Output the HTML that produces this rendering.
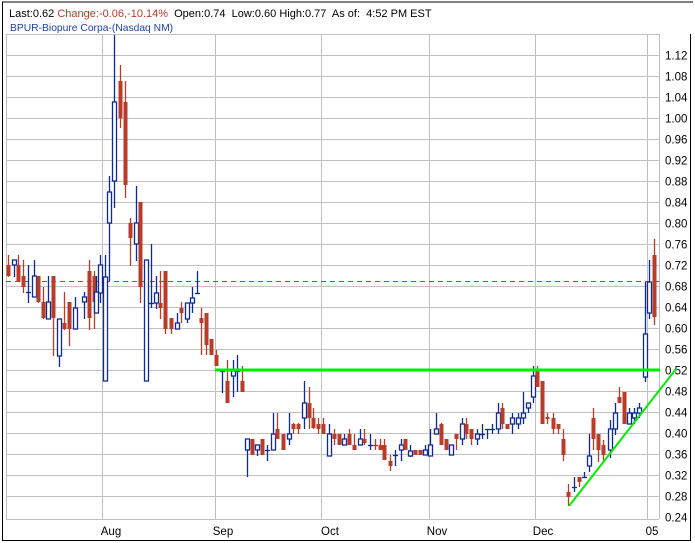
<!DOCTYPE html>
<html><head><meta charset="utf-8"><style>
html,body{margin:0;padding:0;background:#fff;width:695px;height:543px;overflow:hidden}
svg{display:block}
text{font-family:"Liberation Sans",Arial,sans-serif}
</style></head><body>
<svg id="s" width="695" height="543" xmlns="http://www.w3.org/2000/svg">
<rect x="0" y="0" width="695" height="543" fill="#fff"/>
<line x1="2" y1="2" x2="693" y2="2" stroke="#000"/>
<line x1="2.5" y1="2" x2="2.5" y2="541" stroke="#000"/>
<line x1="690.5" y1="34" x2="690.5" y2="541" stroke="#000"/>
<line x1="2" y1="540.5" x2="691" y2="540.5" stroke="#000"/>
<text x="9" y="17" font-size="11" fill="#000" xml:space="preserve">Last:0.62 <tspan fill="#c0392b">Change:-0.06,-10.14%</tspan>  Open:0.74  Low:0.60 High:0.77  As of:  4:52 PM EST</text>
<text x="10" y="31" font-size="10.3" fill="#1f3fa8">BPUR-Biopure Corpa-(Nasdaq NM)</text>
<g id="grid" stroke="#c0c0c0" stroke-width="1"></g>
<g id="lbl" font-size="11.5" fill="#000"></g>
<line x1="6" y1="281.5" x2="659" y2="281.5" stroke="#b5442c" stroke-dasharray="5,4"/>
<g id="c"></g>
<line x1="215" y1="370" x2="660" y2="370" stroke="#00ee00" stroke-width="3"/>
<line x1="569" y1="506" x2="676" y2="369" stroke="#00ee00" stroke-width="2"/>
<text x="111" y="535" font-size="11.5" text-anchor="middle">Aug</text>
<text x="223" y="535" font-size="11.5" text-anchor="middle">Sep</text>
<text x="330" y="535" font-size="11.5" text-anchor="middle">Oct</text>
<text x="437" y="535" font-size="11.5" text-anchor="middle">Nov</text>
<text x="543" y="535" font-size="11.5" text-anchor="middle">Dec</text>
<text x="652" y="535" font-size="11.5" text-anchor="middle">05</text>
</svg>
<script>
var NS="http://www.w3.org/2000/svg";
function el(p,t,a){var e=document.createElementNS(NS,t);for(var k in a)e.setAttribute(k,a[k]);p.appendChild(e);return e;}
var g=document.getElementById('grid'),l=document.getElementById('lbl');
el(g,'line',{x1:6,y1:34.5,x2:659,y2:34.5});
el(g,'line',{x1:6,y1:519.5,x2:659,y2:519.5});
[6.5,102.5,215.5,321.5,429.5,535.5,647.5,659.5].forEach(function(x){el(g,'line',{x1:x,y1:34,x2:x,y2:519});});
for(var i=0;i<=22;i++){var p=0.24+i*0.04;var y=Math.round(517-(p-0.24)*525)+0.5;
 if(i>0)el(g,'line',{x1:6,y1:y,x2:659,y2:y});
 var t=el(l,'text',{x:665,y:y+4});t.textContent=p.toFixed(2);}
var d=[
[8,265,276,255,277,'r'],[14,260,265,260,277,'b'],[18,265,282,255,282,'r'],[23,276,287,260,293,'r'],[28,292,293,265,303,'b'],
[34,276,297,260,297,'b'],[38,276,302,276,303,'r'],[43,302,318,287,319,'r'],[48,302,319,276,319,'b'],[53,276,318,276,356,'r'],
[59,319,356,319,367,'b'],[64,323,329,292,330,'r'],[69,302,329,302,346,'r'],[75,308,329,297,329,'b'],[84,297,302,292,319,'b'],
[89,271,318,260,330,'r'],[94,276,302,271,329,'r'],[96,292,313,276,313,'b'],[100,265,293,255,303,'b'],[105,277,381,255,381,'b'],
[109,192,223,176,281,'b'],[114,102,181,35,208,'b'],[120,81,118,65,128,'r'],[125,102,185,81,198,'r'],[130,223,238,218,266,'r'],
[136,223,244,186,261,'b'],[140,202,287,202,303,'r'],[146,260,381,260,381,'b'],[151,303,304,244,308,'b'],[156,293,303,276,309,'b'],
[160,303,308,271,319,'r'],[165,271,329,271,334,'r'],[171,318,329,318,334,'r'],[177,323,329,313,329,'b'],[181,308,313,302,323,'r'],
[187,303,319,303,323,'b'],[192,298,303,287,313,'b'],[197,293,294,271,293,'b'],[201,318,323,308,355,'r'],[206,313,345,313,355,'r'],
[211,339,355,339,355,'r'],[216,355,366,350,366,'r'],[222,371,372,371,393,'b'],[227,381,403,360,403,'r'],[233,371,376,360,397,'b'],
[237,371,372,355,392,'b'],[242,381,392,366,392,'r'],[247,439,450,439,477,'b'],[252,439,455,439,455,'r'],[257,445,450,445,456,'b'],
[262,439,455,439,455,'r'],[267,450,451,445,461,'b'],[273,434,450,413,450,'b'],[277,429,439,413,439,'r'],[283,434,450,434,450,'r'],
[289,434,439,413,445,'b'],[293,424,429,423,434,'r'],[298,424,429,423,434,'r'],[304,403,418,381,429,'b'],[309,403,418,387,429,'r'],
[313,418,428,408,429,'r'],[318,424,429,418,434,'r'],[323,424,434,418,434,'r'],[329,434,456,424,456,'b'],[334,434,439,429,445,'r'],
[339,434,445,434,445,'r'],[344,439,445,434,445,'b'],[349,434,445,429,445,'r'],[354,445,450,434,450,'r'],[360,439,445,429,445,'b'],
[364,439,443,429,445,'r'],[370,445,446,434,450,'b'],[375,445,446,439,450,'r'],[380,445,450,439,450,'r'],[384,445,460,439,460,'r'],
[390,461,466,455,471,'r'],[395,455,456,450,466,'b'],[401,445,450,439,461,'b'],[405,439,450,439,450,'r'],[410,451,456,445,457,'b'],
[415,450,455,450,455,'r'],[420,450,455,450,455,'r'],[425,450,455,445,455,'b'],[430,445,456,429,456,'b'],[436,429,434,413,434,'b'],
[441,424,445,423,445,'r'],[446,439,450,439,450,'r'],[451,445,455,445,455,'b'],[456,434,439,434,450,'r'],[462,424,439,418,445,'b'],
[466,424,434,418,439,'r'],[471,429,439,429,445,'r'],[477,434,439,429,445,'b'],[482,434,435,424,439,'b'],[487,429,430,429,439,'b'],
[492,429,430,424,434,'b'],[498,413,429,403,434,'b'],[502,408,424,403,429,'r'],[507,424,429,424,429,'r'],[512,418,424,413,434,'b'],
[518,418,424,413,429,'b'],[523,413,418,392,424,'b'],[528,403,408,403,413,'b'],[533,376,397,366,403,'b'],[537,371,387,366,387,'r'],
[542,381,424,381,424,'r'],[547,417,419,413,424,'r'],[553,418,429,413,434,'r'],[558,424,429,424,434,'r'],[563,439,455,429,461,'r'],
[568,492,497,484,506,'r'],[574,487,488,477,492,'b'],[579,477,482,477,487,'r'],[584,477,478,472,477,'b'],[589,456,466,434,472,'b'],
[593,418,439,408,450,'r'],[598,434,450,434,462,'r'],[603,445,455,440,462,'r'],[610,429,450,420,458,'b'],[615,413,429,403,435,'b'],
[619,397,403,387,403,'r'],[624,392,424,392,424,'r'],[629,413,424,408,424,'b'],[634,413,418,408,424,'b'],[639,408,413,403,418,'b'],
[645,334,377,282,382,'b'],[649,282,313,260,319,'b'],[654,255,317,239,325,'r']];
var c=document.getElementById('c');
d.forEach(function(a){var x=a[0],col=a[5]=='r'?'#b83c28':'#0c2a9c';
 el(c,'line',{x1:x+0.5,y1:a[3],x2:x+0.5,y2:a[4],stroke:col,'stroke-width':1.3});
 var h=a[2]-a[1];
 if(h<=1){el(c,'line',{x1:x-2,y1:a[1]+0.5,x2:x+3,y2:a[1]+0.5,stroke:col,'stroke-width':1.3});}
 else if(a[5]=='r'){el(c,'rect',{x:x-1.5,y:a[1],width:4,height:h,fill:col});}
 else{el(c,'rect',{x:x-1.5,y:a[1],width:4,height:h,fill:'#fff',stroke:col,'stroke-width':1.3});}
});
</script>
</body></html>
